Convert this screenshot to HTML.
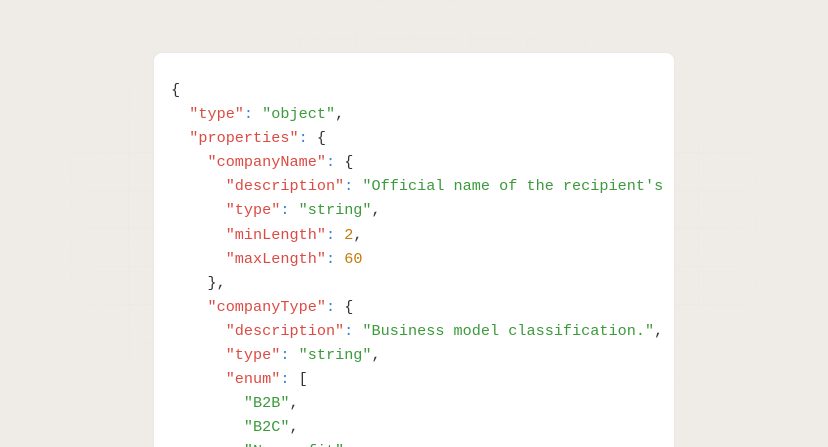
<!DOCTYPE html>
<html><head><meta charset="utf-8"><style>
html,body{margin:0;padding:0;width:828px;height:447px;overflow:hidden}
body{background:#efece7;position:relative;font-family:"Liberation Mono",monospace}
.grid{position:absolute;inset:0;background-image:linear-gradient(#e7e3dd 1px,transparent 1px),linear-gradient(90deg,#e7e3dd 1px,transparent 1px);background-size:57px 38px;background-position:14px 0;opacity:.55;-webkit-mask-image:radial-gradient(ellipse 55% 60% at 50% 50%,#000 30%,transparent 100%)}
.card{position:absolute;left:154px;top:53px;width:520px;height:394px;background:#fff;border-radius:8px 8px 0 0;box-shadow:0 0 0 1px #ebe8e3}
pre{position:absolute;left:171px;top:78px;margin:0;height:369px;font-family:"Liberation Mono",monospace;font-size:15.2px;line-height:24.1px;color:#333;white-space:pre;width:495px;overflow:hidden}
.k{color:#dc4b43}.s{color:#3c9a3c}.c{color:#3d7fd9}.n{color:#c57a0a}
</style></head><body>
<div class="grid"></div>
<div class="card"></div>
<pre>{
  <span class="k">"type"</span><span class="c">:</span> <span class="s">"object"</span>,
  <span class="k">"properties"</span><span class="c">:</span> {
    <span class="k">"companyName"</span><span class="c">:</span> {
      <span class="k">"description"</span><span class="c">:</span> <span class="s">"Official name of the recipient's</span>
      <span class="k">"type"</span><span class="c">:</span> <span class="s">"string"</span>,
      <span class="k">"minLength"</span><span class="c">:</span> <span class="n">2</span>,
      <span class="k">"maxLength"</span><span class="c">:</span> <span class="n">60</span>
    },
    <span class="k">"companyType"</span><span class="c">:</span> {
      <span class="k">"description"</span><span class="c">:</span> <span class="s">"Business model classification."</span>,
      <span class="k">"type"</span><span class="c">:</span> <span class="s">"string"</span>,
      <span class="k">"enum"</span><span class="c">:</span> [
        <span class="s">"B2B"</span>,
        <span class="s">"B2C"</span>,
        <span class="s">"Nonprofit"</span>
</pre>
</body></html>
